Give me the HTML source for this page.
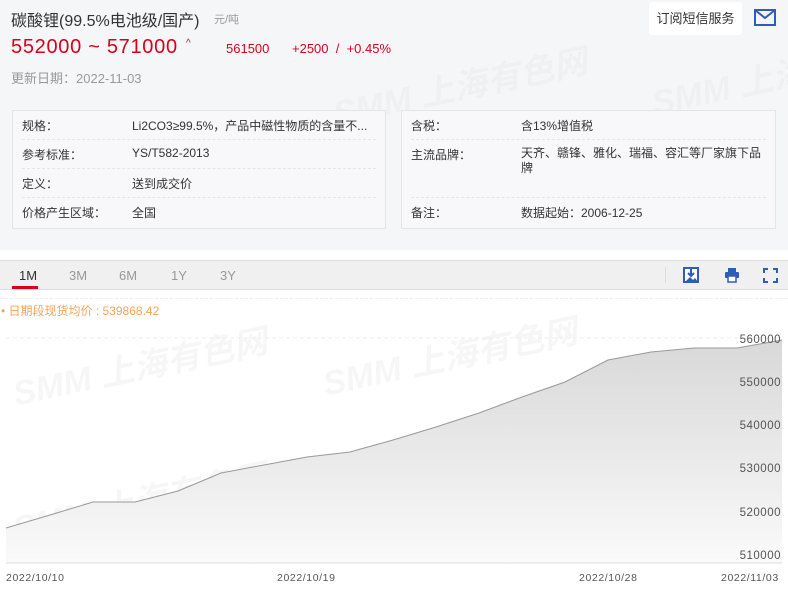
<!DOCTYPE html>
<html><head><meta charset="utf-8"><style>
*{margin:0;padding:0;box-sizing:border-box}
body{width:788px;height:593px;overflow:hidden;background:#fff;font-family:"Liberation Sans","Noto Sans CJK SC",sans-serif;position:relative}
.top{position:absolute;left:0;top:0;width:788px;height:250px;background:#f5f6f8}
.a{position:absolute;white-space:nowrap}
.box{position:absolute;top:110px;height:119px;border:1px solid #e4e5e8;background:#f8f8fa}
.row{position:absolute;left:9px;right:9px;height:29px;border-bottom:1px dashed #e4e5e8;font-size:12px;color:#333}
.row span{position:absolute;top:6px}
.wm{position:absolute;color:rgba(0,0,0,0.025);font-weight:bold;font-style:italic;font-size:34px;white-space:nowrap;transform:rotate(-12deg)}
</style></head><body>
<div class="top"></div>
<div class="wm" style="left:330px;top:60px">SMM 上海有色网</div>
<div class="wm" style="left:650px;top:60px">SMM 上海</div>
<div class="wm" style="left:10px;top:340px;color:rgba(0,0,0,0.035)">SMM 上海有色网</div>
<div class="wm" style="left:320px;top:330px;color:rgba(0,0,0,0.035)">SMM 上海有色网</div>
<div class="wm" style="left:10px;top:475px;color:rgba(0,0,0,0.035)">SMM 上海有色网</div>
<div class="a" style="left:11px;top:7px;font-size:16px;color:#333">碳酸锂(99.5%电池级/国产)</div>
<div class="a" style="left:214px;top:11px;font-size:11px;color:#999">元/吨</div>
<div class="a" style="left:11px;top:36px;font-size:20px;letter-spacing:0.7px;color:#d8001b">552000 ~ 571000</div>
<div class="a" style="left:186px;top:38px;font-size:10px;color:#d8001b">^</div>
<div class="a" style="left:226px;top:41px;font-size:13px;color:#d8001b">561500</div>
<div class="a" style="left:292px;top:41px;font-size:13px;color:#d8001b">+2500 &nbsp;/ &nbsp;+0.45%</div>
<div class="a" style="left:11px;top:68px;font-size:13px;color:#999">更新日期：2022-11-03</div>
<div class="a" style="left:649px;top:2px;width:93px;height:33px;background:#fff;border-radius:3px;font-size:13px;color:#333;line-height:33px;text-align:center">订阅短信服务</div>
<svg class="a" style="left:754px;top:9px" width="22" height="17"><rect x="1" y="1" width="20" height="15" fill="none" stroke="#2f5cb8" stroke-width="2"/><path d="M1 1l10 8 10-8" fill="none" stroke="#2f5cb8" stroke-width="2"/></svg>

<div class="box" style="left:12px;width:374px">
<div class="row" style="top:0"><span style="left:0">规格：</span><span style="left:110px">Li2CO3≥99.5%，产品中磁性物质的含量不...</span></div>
<div class="row" style="top:29px"><span style="left:0">参考标准：</span><span style="left:110px">YS/T582-2013</span></div>
<div class="row" style="top:58px"><span style="left:0">定义：</span><span style="left:110px">送到成交价</span></div>
<div class="row" style="top:87px;border:none"><span style="left:0">价格产生区域：</span><span style="left:110px">全国</span></div>
</div>
<div class="box" style="left:401px;width:375px">
<div class="row" style="top:0"><span style="left:0">含税：</span><span style="left:110px">含13%增值税</span></div>
<div class="row" style="top:29px;height:58px"><span style="left:0">主流品牌：</span><span style="left:110px;white-space:normal;width:245px;line-height:15px">天齐、赣锋、雅化、瑞福、容汇等厂家旗下品牌</span></div>
<div class="row" style="top:87px;border:none"><span style="left:0">备注：</span><span style="left:110px">数据起始：2006-12-25</span></div>
</div>

<div class="a" style="left:0;top:260px;width:788px;height:30px;background:#f0f0f0;border-top:1px solid #ddd;border-bottom:1px solid #ddd"></div>
<div class="a" style="left:19px;top:268px;font-size:13px;color:#333">1M</div>
<div class="a" style="left:12px;top:286px;width:26px;height:3px;background:#d8001b"></div>
<div class="a" style="left:69px;top:268px;font-size:13px;color:#999">3M</div>
<div class="a" style="left:119px;top:268px;font-size:13px;color:#999">6M</div>
<div class="a" style="left:171px;top:268px;font-size:13px;color:#999">1Y</div>
<div class="a" style="left:220px;top:268px;font-size:13px;color:#999">3Y</div>
<div class="a" style="left:665px;top:267px;width:1px;height:16px;background:#ddd"></div>
<svg class="a" style="left:683px;top:267px" width="16" height="16"><rect x="1" y="1" width="14" height="14" fill="#fff" stroke="#2f5cb8" stroke-width="2"/><path d="M2 15l5-5 3 3 2-2 3 4z" fill="#2f5cb8"/><path d="M8 2v6M5 6l3 3 3-3" stroke="#2f5cb8" stroke-width="2" fill="none"/></svg>
<svg class="a" style="left:724px;top:267px" width="16" height="16"><rect x="4" y="1" width="8" height="4" fill="#2f5cb8"/><rect x="1" y="5" width="14" height="6" rx="1" fill="#2f5cb8"/><rect x="4" y="9" width="8" height="6" fill="#fff" stroke="#2f5cb8" stroke-width="1.5"/></svg>
<svg class="a" style="left:763px;top:268px" width="15" height="15" fill="none" stroke="#2f5cb8" stroke-width="2"><path d="M1 5V1h4M10 1h4v4M14 10v4h-4M5 14H1v-4"/></svg>
<div class="a" style="left:0;top:298px;width:788px;border-top:1px dashed #eee"></div>
<div class="a" style="left:1px;top:302px;font-size:12px;color:#f7a35c">• 日期段现货均价 : 539868.42</div>

<svg class="a" style="left:0;top:320px" width="788" height="273">
<defs><linearGradient id="g" x1="0" y1="0" x2="0" y2="1"><stop offset="0" stop-color="#d8d8d8"/><stop offset="1" stop-color="#fafafa"/></linearGradient></defs>
<g stroke="#eee" stroke-dasharray="4,3"><line x1="6" y1="18" x2="782" y2="18"/></g>
<path d="M6 208L50 195L93 182L135 182L178 171L221 153L264 145L307 137L350 132L393 120L436 107L479 93L522 77L565 62L608 40L651 32L694 28L737 28L782 20L782 243L6 243Z" fill="url(#g)"/>
<path d="M6 208L50 195L93 182L135 182L178 171L221 153L264 145L307 137L350 132L393 120L436 107L479 93L522 77L565 62L608 40L651 32L694 28L737 28L782 20" fill="none" stroke="#999" stroke-width="1"/>
<line x1="6" y1="243" x2="782" y2="243" stroke="#ddd"/>
<g font-size="11.5" fill="#555" text-anchor="end" font-family="Liberation Sans,sans-serif" letter-spacing="0.5">
<text x="781" y="23">560000</text><text x="781" y="66">550000</text><text x="781" y="109">540000</text><text x="781" y="152">530000</text><text x="781" y="196">520000</text><text x="781" y="239">510000</text>
</g>
<g font-size="10.5" fill="#555" font-family="Liberation Sans,sans-serif" letter-spacing="0.6">
<text x="6" y="261">2022/10/10</text><text x="277" y="261">2022/10/19</text><text x="579" y="261">2022/10/28</text><text x="721" y="261">2022/11/03</text>
</g>
</svg>
</body></html>
